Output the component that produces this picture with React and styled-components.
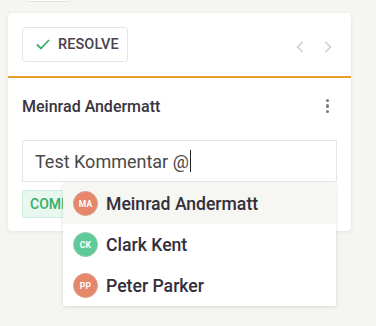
import React from "react";
import styled, { createGlobalStyle } from "styled-components";

const Global = createGlobalStyle`
  html, body { margin: 0; padding: 0; background: #f5f5f1; }
  body { font-family: Roboto, "Noto Sans", sans-serif; -webkit-font-smoothing: antialiased; }
  * { box-sizing: border-box; }
`;

const MEDIUM = `font-family: "Roboto Medium", Roboto, sans-serif; font-weight: 500;`;

const Page = styled.div`
  width: 376px;
  height: 326px;
  overflow: hidden;
  background: #f5f5f1;
`;

const Stub = styled.div`
  margin-left: 28px;
  width: 40px;
  height: 2px;
  background: #fff;
  border: 1px solid #e2e2de;
  border-top: none;
  border-radius: 0 0 3px 3px;
`;

const Card = styled.div`
  margin: 11px 0 0 8px;
  width: 343px;
  height: 218px;
  background: #fff;
  border-radius: 4px;
  box-shadow: 0 1px 4px rgba(0, 0, 0, 0.07), 0 0 1px rgba(0, 0, 0, 0.06);
`;

const Header = styled.div`
  display: flex;
  align-items: center;
  justify-content: space-between;
  padding: 14px 14px 14px 14px;
  height: 65px;
  border-bottom: 2px solid #e5a02f;
`;

const ResolveButton = styled.button`
  display: flex;
  align-items: center;
  gap: 8px;
  height: 35px;
  width: 106px;
  padding: 0 0 0 13px;
  background: #fff;
  border: 1px solid #e6e6e3;
  border-radius: 3px;
  ${MEDIUM}
  font-size: 14.5px;
  color: #4a4350;
  letter-spacing: 0.1px;
`;

const Nav = styled.div`
  display: flex;
  gap: 20px;
  align-items: center;
  padding-top: 5px;
  margin-right: 5px;
`;

const Body = styled.div`
  padding: 16px 14px 13px 14px;
`;

const AuthorRow = styled.div`
  display: flex;
  align-items: center;
  justify-content: space-between;
  height: 24px;
`;

const Author = styled.span`
  ${MEDIUM}
  font-size: 16px;
  color: #3a3540;
`;

const Kebab = styled.div`
  display: flex;
  flex-direction: column;
  gap: 2px;
  margin-right: 8px;
  span {
    width: 3.5px;
    height: 3.5px;
    border-radius: 50%;
    background: #7a7a7a;
  }
`;

const InputWrap = styled.div`
  position: relative;
  margin-top: 22px;
`;

const Input = styled.div`
  height: 42px;
  width: 315px;
  border: 1px solid #e6e6e3;
  display: flex;
  align-items: center;
  padding-left: 12px;
  font-size: 18px;
  color: #4a4848;
`;

const Caret = styled.span`
  display: inline-block;
  width: 1px;
  height: 22px;
  background: #222;
  margin-left: 1px;
  vertical-align: middle;
`;

const CommentButton = styled.button`
  margin-top: 8px;
  height: 28px;
  padding: 0 10px 0 7px;
  background: #e8f8ef;
  border: 1px solid #cdeedb;
  border-radius: 3px;
  ${MEDIUM}
  font-size: 14px;
  color: #3aae6a;
`;

const Dropdown = styled.ul`
  position: absolute;
  top: 43px;
  left: 41px;
  width: 273px;
  margin: 0;
  padding: 0;
  list-style: none;
  background: #fff;
  box-shadow: 0 1px 4px rgba(0, 0, 0, 0.12);
  z-index: 2;
`;

const Option = styled.li`
  display: flex;
  align-items: center;
  gap: 8px;
  height: 41px;
  padding-left: 10px;
  background: ${(p) => (p.$active ? "#f6f6f2" : "#fff")};
  ${MEDIUM}
  font-size: 17.6px;
  color: #34303c;
`;

const Avatar = styled.span`
  width: 25px;
  height: 25px;
  border-radius: 50%;
  background: ${(p) => p.$color};
  border: 1.5px solid ${(p) => p.$ring};
  display: flex;
  align-items: center;
  justify-content: center;
  color: #fff;
  font-family: Roboto, sans-serif;
  font-size: 8.5px;
  font-weight: 700;
  letter-spacing: 0.2px;
`;

const Chevron = ({ dir }) => (
  <svg width="8" height="12" viewBox="0 0 8 12">
    <path
      d={dir === "left" ? "M6.5 1 L1.5 6 L6.5 11" : "M1.5 1 L6.5 6 L1.5 11"}
      fill="none"
      stroke="#cfcfcf"
      strokeWidth="1.6"
    />
  </svg>
);

const users = [
  { i: "MA", n: "Meinrad Andermatt", c: "#e6876b", r: "#d9a091", a: true },
  { i: "CK", n: "Clark Kent", c: "#5fca99", r: "#93c9ae" },
  { i: "PP", n: "Peter Parker", c: "#e6876b", r: "#d9a091" },
];

export default function App() {
  return (
    <Page>
      <Global />
      <Stub />
      <Card>
        <Header>
          <ResolveButton>
            <svg width="14" height="11" viewBox="0 0 14 11">
              <path d="M1 5.5 L5 9.5 L13 1" fill="none" stroke="#3dab6b" strokeWidth="1.8" />
            </svg>
            RESOLVE
          </ResolveButton>
          <Nav>
            <Chevron dir="left" />
            <Chevron dir="right" />
          </Nav>
        </Header>
        <Body>
          <AuthorRow>
            <Author>Meinrad Andermatt</Author>
            <Kebab>
              <span />
              <span />
              <span />
            </Kebab>
          </AuthorRow>
          <InputWrap>
            <Input>
              Test Kommentar @<Caret />
            </Input>
            <Dropdown>
              {users.map((u) => (
                <Option key={u.i} $active={u.a}>
                  <Avatar $color={u.c} $ring={u.r}>{u.i}</Avatar>
                  {u.n}
                </Option>
              ))}
            </Dropdown>
          </InputWrap>
          <CommentButton>COMMENT</CommentButton>
        </Body>
      </Card>
    </Page>
  );
}
